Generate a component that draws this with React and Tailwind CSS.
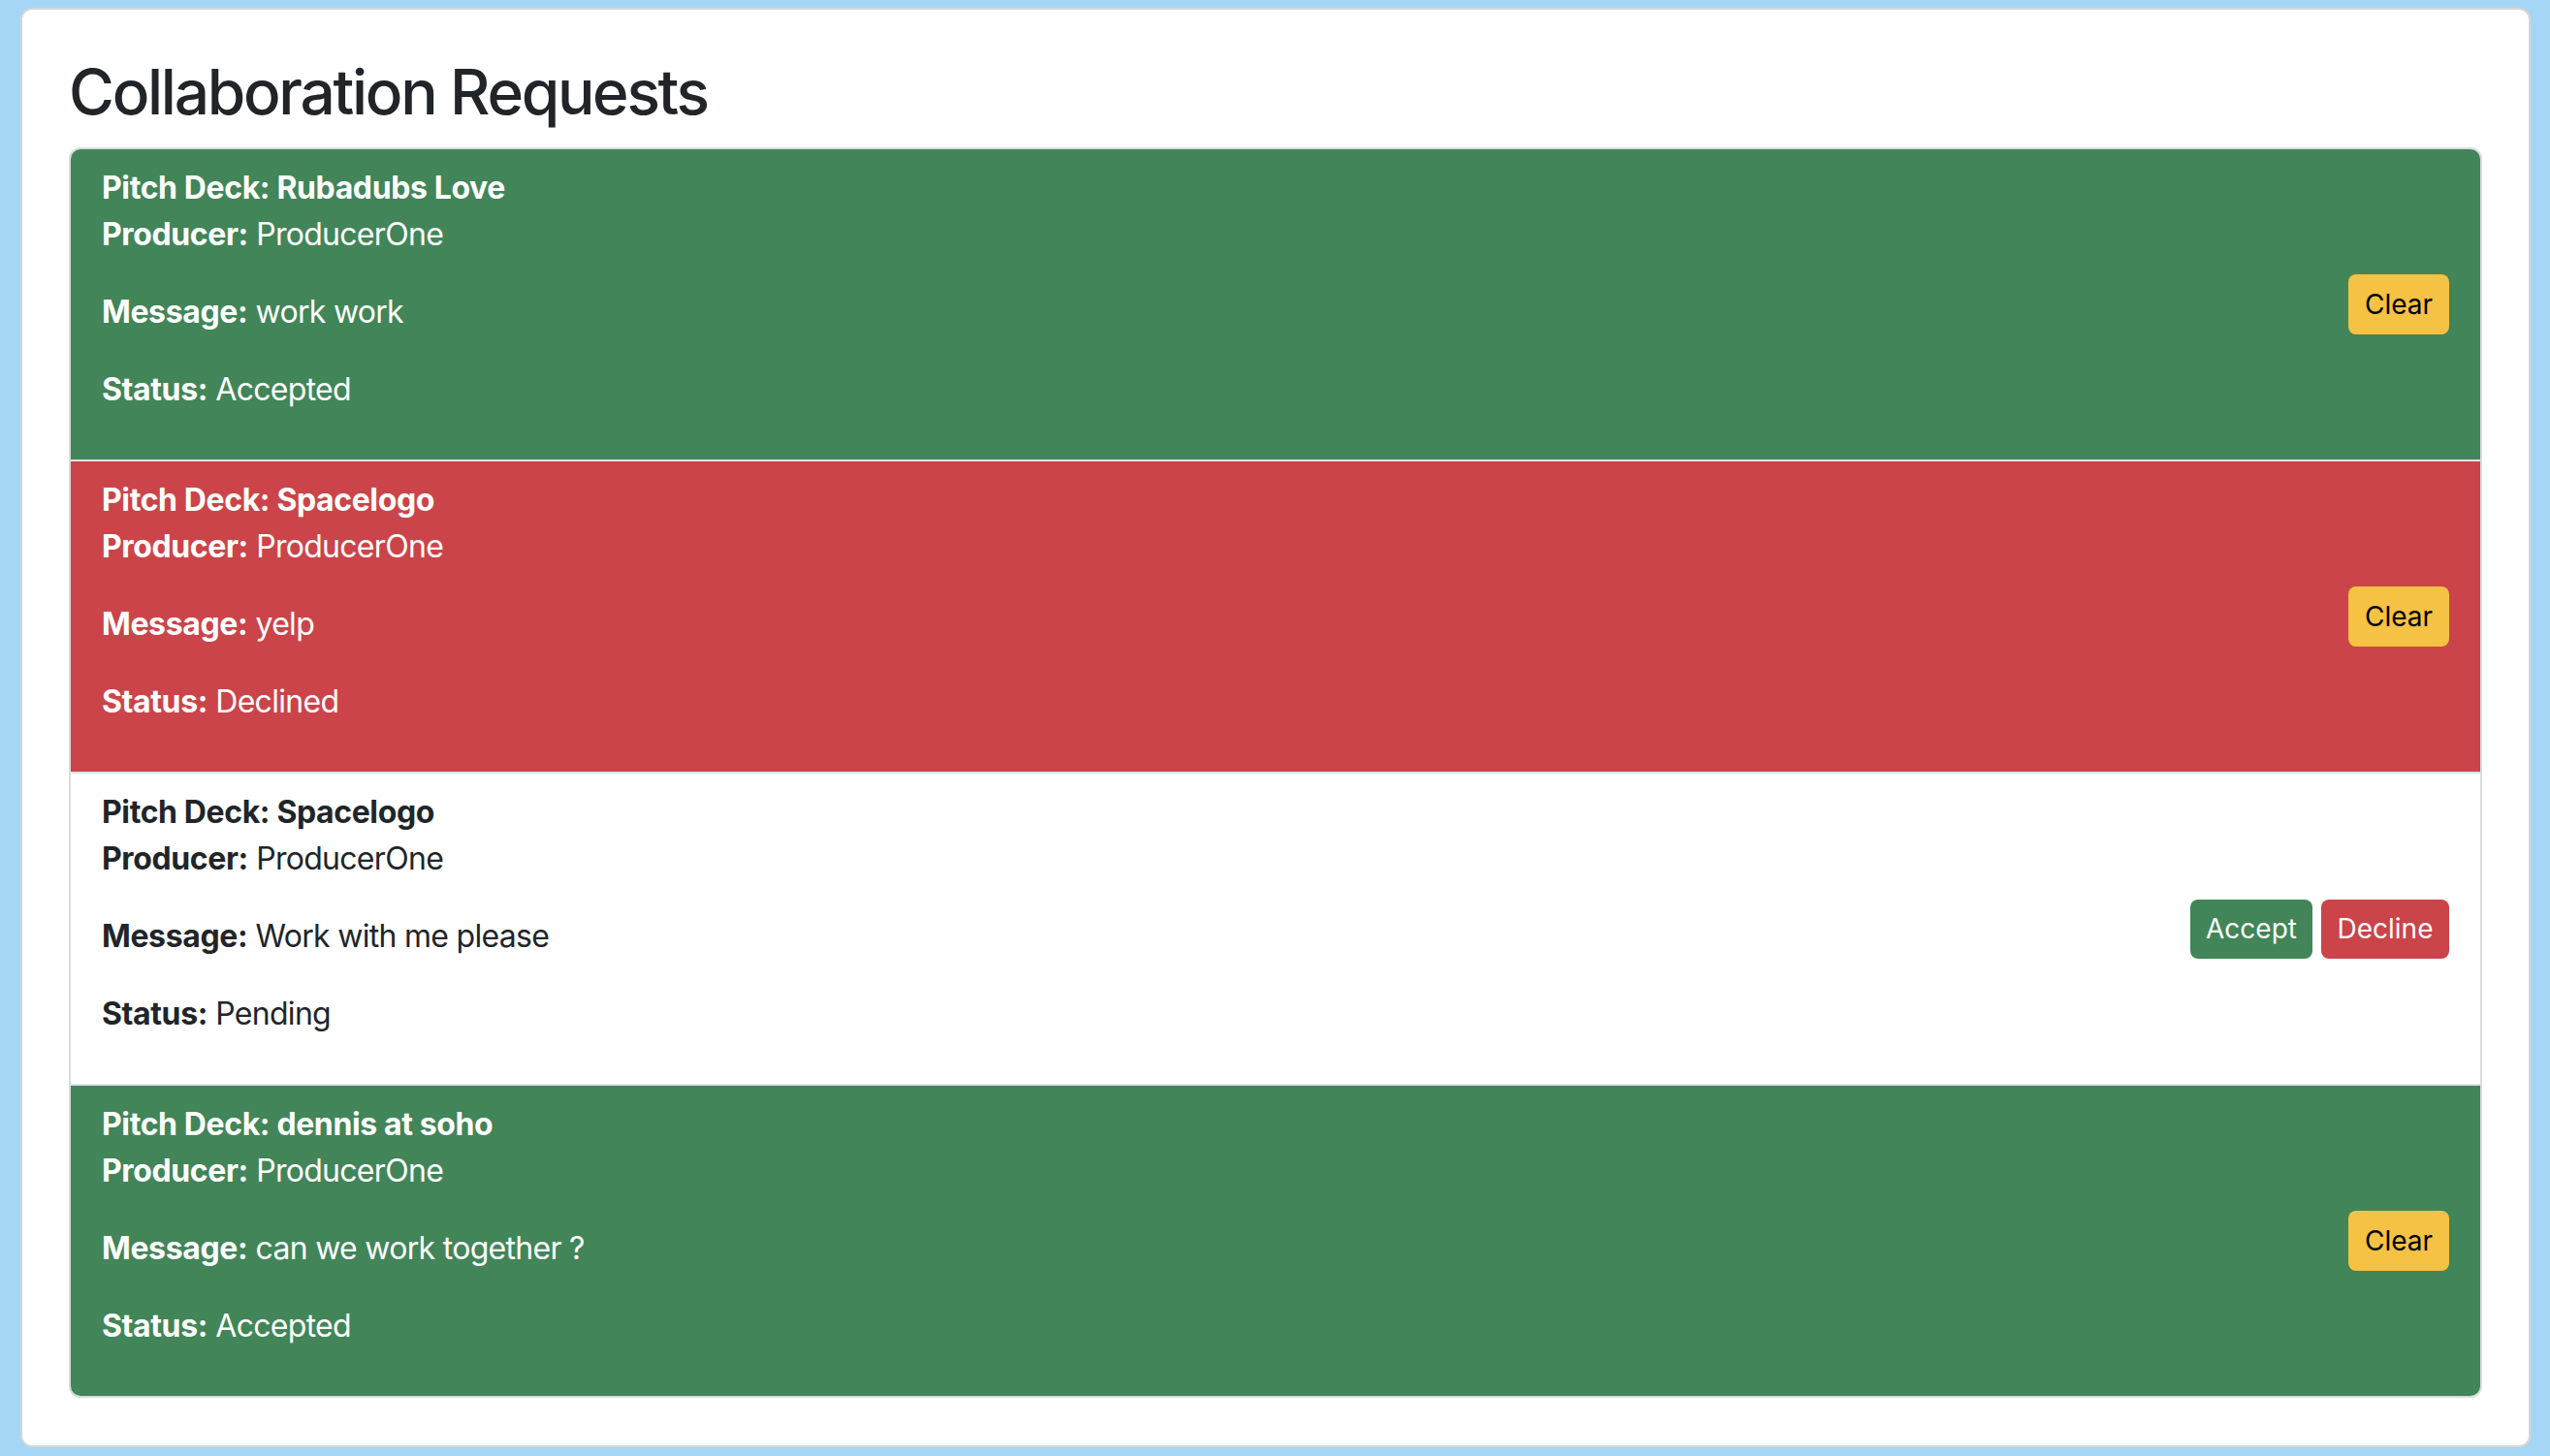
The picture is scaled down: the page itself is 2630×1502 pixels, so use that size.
import React from 'react';

// Demandes de collaboration – liste des requêtes reçues
const requests = [
  { deck: 'Rubadubs Love', producer: 'ProducerOne', message: 'work work', status: 'Accepted' },
  { deck: 'Spacelogo', producer: 'ProducerOne', message: 'yelp', status: 'Declined' },
  { deck: 'Spacelogo', producer: 'ProducerOne', message: 'Work with me please', status: 'Pending' },
  { deck: 'dennis at soho', producer: 'ProducerOne', message: 'can we work together ?', status: 'Accepted' },
];

const itemStyles = {
  Accepted: 'bg-[#418559] text-white',
  Declined: 'bg-[#cb444a] text-white',
  Pending: 'bg-white text-[#212529]',
};

const RequestItem = ({ req, first }) => (
  <div
    className={`flex items-center justify-between px-[32px] py-[16px] ${first ? '' : 'border-t-2 border-[#dee2e6]'} ${itemStyles[req.status]}`}
  >
    <div className="text-[32px] leading-[48px] tracking-[-0.022em]">
      <div className="font-bold tracking-[-0.012em]">Pitch Deck: {req.deck}</div>
      <p className="mb-[32px]">
        <strong className="font-bold tracking-[-0.012em]">Producer:</strong> {req.producer}
      </p>
      <p className="mb-[32px]">
        <strong className="font-bold tracking-[-0.012em]">Message:</strong> {req.message}
      </p>
      <p className="mb-[32px]">
        <strong className="font-bold tracking-[-0.012em]">Status:</strong> {req.status}
      </p>
    </div>

    {req.status === 'Pending' ? (
      <div className="flex gap-[9px]">
        <button className="h-[61px] w-[126px] rounded-[8px] bg-[#418559] text-white text-[28px] leading-[42px]">
          Accept
        </button>
        <button className="h-[61px] w-[132px] rounded-[8px] bg-[#cb444a] text-white text-[28px] leading-[42px]">
          Decline
        </button>
      </div>
    ) : (
      <button className="h-[62px] w-[104px] rounded-[8px] bg-[#f5c244] text-black text-[28px] leading-[42px]">
        Clear
      </button>
    )}
  </div>
);

const App = () => {
  return (
    <div
      className="min-h-screen bg-[#a6d6f5] pt-[8px] pb-[10px] pl-[21px] pr-[20px]"
      style={{ fontFamily: 'Inter, "Noto Sans", sans-serif' }}
    >
      <div className="min-h-[1484px] bg-white border-2 border-[#d6d6d6] rounded-[12px] px-[48px] pt-[46px] pb-[49px]">
        <h2 className="text-[64px] leading-[77px] font-medium tracking-[-0.036em] text-[#212529] mb-[19px]">
          Collaboration Requests
        </h2>

        <div className="border-2 border-[#d9dcdf] rounded-[12px] overflow-hidden">
          {requests.map((req, index) => (
            <RequestItem key={index} req={req} first={index === 0} />
          ))}
        </div>
      </div>
    </div>
  );
};

export default App;
